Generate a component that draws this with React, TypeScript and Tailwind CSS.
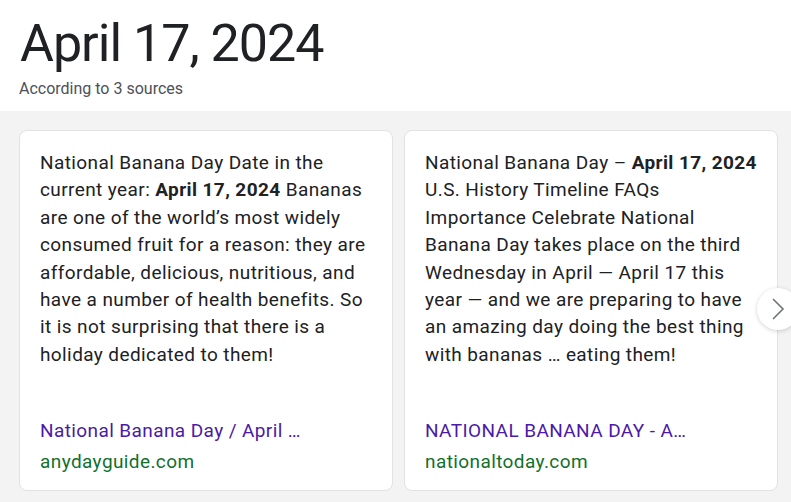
const CARDS = [
  {
    before: 'National Banana Day Date in the current year: ',
    bold: 'April 17, 2024',
    after:
      ' Bananas are one of the world’s most widely consumed fruit for a reason: they are affordable, delicious, nutritious, and have a number of health benefits. So it is not surprising that there is a holiday dedicated to them!',
    title: 'National Banana Day / April …',
    site: 'anydayguide.com',
  },
  {
    before: 'National Banana Day – ',
    bold: 'April 17, 2024',
    after:
      ' U.S. History Timeline FAQs Importance Celebrate National Banana Day takes place on the third Wednesday in April — April 17 this year — and we are preparing to have an amazing day doing the best thing with bananas … eating them!',
    title: 'NATIONAL BANANA DAY - A…',
    site: 'nationaltoday.com',
  },
]

export default function App() {
  return (
    <div className="w-[791px] h-[502px] overflow-hidden bg-white text-[#202124] font-['Roboto','Liberation_Sans',sans-serif]">
      {/* Header */}
      <div className="h-[111px] px-[19px] pt-[13px]">
        <h1 className="text-[52px] leading-[62px] tracking-[-1px] pl-px">April 17, 2024</h1>
        <p className="text-[16px] leading-[20px] text-[#4d5156] mt-[4px]">According to 3 sources</p>
      </div>

      {/* Cards */}
      <div className="relative bg-[#f3f3f3] h-[391px] pt-[19px] pl-[19px] overflow-hidden">
        <div className="flex gap-[11px]">
          {CARDS.map(c => (
            <div
              key={c.site}
              className="w-[374px] h-[361px] shrink-0 flex flex-col bg-white rounded-[8px] border border-[#e2e2e2] px-[20px] pt-[18px] pb-[12px]"
            >
              <p className="text-[19px] leading-[27.4px] tracking-[0.4px]">
                {c.before}
                <b className="font-bold">{c.bold}</b>
                {c.after}
              </p>
              <div className="mt-auto text-[19px] tracking-[0.4px]">
                <p className="leading-[30px] text-[#4b1aa6] truncate">{c.title}</p>
                <p className="leading-[32px] text-[#10702c]">{c.site}</p>
              </div>
            </div>
          ))}
        </div>
        <button className="absolute left-[757px] top-[177px] w-[42px] h-[42px] rounded-full bg-white shadow-[0_1px_4px_rgba(0,0,0,0.18)] flex items-center justify-center text-[#70757a]">
          <svg width="14" height="24" viewBox="0 0 14 24" fill="none" stroke="currentColor" strokeWidth="1.6">
            <path d="M2 2l10 10L2 22" />
          </svg>
        </button>
      </div>
    </div>
  )
}
